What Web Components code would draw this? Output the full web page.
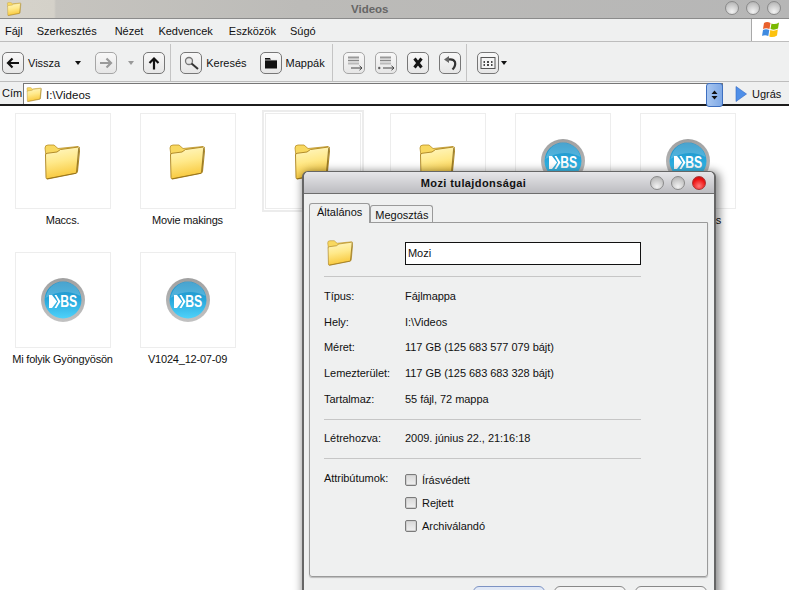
<!DOCTYPE html>
<html>
<head>
<meta charset="utf-8">
<title>Videos</title>
<style>
html, body { margin: 0; height: 590px; overflow: hidden; background: #fff; }
body { font: 11px "Liberation Sans", Arial, sans-serif; color: #111; }
</style>
</head>
<body>
<explorer-window></explorer-window>

<script>
const FOLDER = `
<svg viewBox="0 0 36 36" width="100%" height="100%">
  <defs>
    <linearGradient id="front" x1="0" y1="0" x2="0.2" y2="1">
      <stop offset="0" stop-color="#fff8c8"/>
      <stop offset="0.5" stop-color="#ffe98a"/>
      <stop offset="1" stop-color="#f8c83c"/>
    </linearGradient>
  </defs>
  <path d="M1 4Q1 1 4 1H10L14 4.500L34 2.500L33 8L2 12Z" fill="#f8d860" stroke="#b98f24" stroke-width=".8"/>
  <path d="M1.500 11Q1.500 9.500 3 9.300L13 8L16.500 5.500L34.500 3Q36 3 35.800 4.500L33.500 27.500Q33.300 29 32 29.300L3.500 35Q2 35 2 33.500Z" fill="url(#front)" stroke="#a9811f" stroke-width=".9"/>
  <path d="M34.800 4L32.600 28.500" stroke="#7c5d12" stroke-width="1.200" fill="none" opacity=".75"/>
  <path d="M3 34.800L32 29.200" stroke="#8a6814" stroke-width="1" fill="none" opacity=".7"/>
</svg>`;

const BS_ICON = `
<svg viewBox="0 0 44 44" width="100%" height="100%">
  <defs>
    <linearGradient id="ring" x1="0" y1="0" x2="0" y2="1">
      <stop offset="0" stop-color="#a0a0a0"/>
      <stop offset="1" stop-color="#c2c2c2"/>
    </linearGradient>
    <linearGradient id="ball" x1="0" y1="0" x2="0" y2="1">
      <stop offset="0" stop-color="#1c8cc2"/>
      <stop offset="0.5" stop-color="#28a8dc"/>
      <stop offset="1" stop-color="#4fd2fa"/>
    </linearGradient>
  </defs>
  <circle cx="22" cy="22" r="22" fill="url(#ring)"/>
  <circle cx="22" cy="22" r="18.500" fill="url(#ball)"/>
  <path d="M4.500 20Q22 9 39.500 18Q36 5 22 3.600Q8 5 4.500 20Z" fill="#fff" opacity=".2"/>
  <path d="M8 17H11L16 23.500L11 30H8ZM13.500 17H15.500L19.500 23.500L15.500 30H13.500L17.200 23.500Z" fill="#fff"/>
  <text x="27.700" y="29.200" text-anchor="middle" font-family="Liberation Sans, Arial, sans-serif" font-weight="700" font-size="16.500" fill="#fff" textLength="17" lengthAdjust="spacingAndGlyphs">BS</text>
</svg>`;

// toolbar glyphs, 22x22
const GLYPHS = {
  back: `<path d="M17 11H6.500M10.500 6.500L6 11L10.500 15.500" fill="none" stroke="#111" stroke-width="2.200"/>`,
  forward: `<path d="M5 11H15.500M11.500 6.500L16 11L11.500 15.500" fill="none" stroke="#9a9a9a" stroke-width="2.200"/>`,
  up: `<path d="M11 17.500V6.500M6.500 11L11 6.500L15.500 11" fill="none" stroke="#111" stroke-width="2.200"/>`,
  search: `<circle cx="9" cy="9" r="3.500" fill="#e8e8e8" stroke="#777" stroke-width="1.300"/><path d="M11.500 11.500L18 17" stroke="#333" stroke-width="2"/>`,
  folders: `<path d="M5 6H10L11 8H17V16.500H5Z" fill="#111"/><path d="M5 8H17" stroke="#ddd" stroke-width=".8"/>`,
  move: `<path d="M5 5.500H16" stroke="#999" stroke-width="2"/><path d="M5 8.500H16" stroke="#888" stroke-width="1.500"/><path d="M5 11.500H16" stroke="#bbb" stroke-width="2"/><path d="M8 16H19M16.500 13.800L19 16L16.500 18.200" fill="none" stroke="#444"/>`,
  copy: `<path d="M5 5.500H16" stroke="#999" stroke-width="2"/><path d="M5 8.500H16" stroke="#888" stroke-width="1.500"/><path d="M5 11.500H16" stroke="#bbb" stroke-width="2"/><path d="M8 16H19M16.500 13.800L19 16L16.500 18.200" fill="none" stroke="#444"/><path d="M3 16H5.500M4.200 14.800V17.200" stroke="#444"/>`,
  del: `<path d="M7.500 6.500L14.500 15.500M14.500 6.500L7.500 15.500" stroke="#151515" stroke-width="3"/>`,
  undo: `<path d="M9 7.500Q14.500 6.500 16 10Q17 14 13.500 17.500" fill="none" stroke="#333" stroke-width="2.200"/><path d="M5 7.500L10 4V11Z" fill="#666"/>`,
  views: `<rect x="4" y="5.500" width="14" height="11" fill="#f4f4f4" stroke="#555"/><path d="M6.500 10H8M10 10H12M14 10H15.500M6.500 13H8M10 13H12M14 13H15.500" stroke="#111" stroke-width="1.500"/>`,
};

class WindowDot extends HTMLElement {
  constructor() {
    super();
    this.attachShadow({ mode: "open" });
    this.shadowRoot.innerHTML = `
      <style>
      :host { display: block; box-sizing: border-box; width: var(--dot, 14px); height: var(--dot, 14px); border-radius: 50%;
        border: 1px solid #8a8a8a; background: radial-gradient(circle at 50% 80%, #f2f2f2, #c8c8c8 60%, #a9a9a9); }
      :host([red]) { border-color: #a33; background: radial-gradient(circle at 50% 75%, #ff7a7a, #ee1515 60%, #b80d0d); }
      </style>`;
  }
}
customElements.define("window-dot", WindowDot);

class FolderIcon extends HTMLElement {
  constructor() {
    super();
    this.attachShadow({ mode: "open" });
    this.shadowRoot.innerHTML = `<style>:host { display: block; width: 36px; height: 36px; }</style>${FOLDER}`;
  }
}
customElements.define("folder-icon", FolderIcon);

class ExplorerTitle extends HTMLElement {
  constructor() {
    super();
    this.attachShadow({ mode: "open" });
    this.shadowRoot.innerHTML = `
      <style>
      :host { display: flex; align-items: center; height: 19px; box-sizing: border-box;
        border-bottom: 1px solid #8b8b8b; padding: 0 6px 0 6px;
        background: linear-gradient(90deg, #d6d3cb 0, #d4d1c9 54px, #c6c4bf 56px, #bcbbb8 300px, #b6b6b6 100%); }
      folder-icon { width: 16px; height: 14px; margin-right: 329px; }
      .name { font-weight: 700; font-size: 11.500px; color: #666; flex: 1; }
      .dots { display: flex; gap: 7px; --dot: 14px; margin-right: 2px; margin-top: -3px; }
      </style>
      <folder-icon></folder-icon>
      <span class="name"><slot></slot></span>
      <div class="dots"><window-dot></window-dot><window-dot></window-dot><window-dot></window-dot></div>`;
  }
}
customElements.define("explorer-title", ExplorerTitle);

class MenuBar extends HTMLElement {
  constructor() {
    super();
    this.attachShadow({ mode: "open" });
    this.shadowRoot.innerHTML = `
      <style>
      :host { display: flex; align-items: center; height: 23px; box-sizing: border-box;
        background: #eff0f0; border-bottom: 1px solid #bdbdbd; padding-left: 5px; }
      .items { display: flex; gap: 16px; flex: 1; padding-top: 2px; }
      .flag { width: 37px; height: 22px; background: #fff; border-left: 1px solid #a8a8a8; display: flex; align-items: center; justify-content: center; }
      </style>
      <div class="items"><slot></slot></div>
      <div class="flag">
        <svg width="20" height="20" viewBox="0 0 20 20">
          <path d="M3 3Q6 1 9.500 3L8.500 9Q5 7.500 2 9Z" fill="#e8612c"/>
          <path d="M10.500 3.500Q14 5 18 2.500L17 8.500Q13.500 10.500 9.500 9Z" fill="#7ab800"/>
          <path d="M2 10Q5 8.500 8.300 10L7.300 16Q4 14.500 1 16Z" fill="#3f8ae0"/>
          <path d="M9.300 10Q13 11.500 16.800 9.500L16 15.500Q12 18 8.300 16.500Z" fill="#fcc20f"/>
        </svg>
      </div>`;
  }
}
customElements.define("menu-bar", MenuBar);

class ToolButton extends HTMLElement {
  constructor() {
    super();
    this.attachShadow({ mode: "open" });
    const glyph = GLYPHS[this.getAttribute("icon")];
    this.shadowRoot.innerHTML = `
      <style>
      :host { display: flex; align-items: center; gap: 4px; }
      .box { width: 22px; height: 22px; box-sizing: border-box; border: 1px solid #777; border-radius: 5px;
        background: linear-gradient(#f8f8f8, #e6e6e6); position: relative; }
      :host([off]) .box { border-color: #a6a6a6; }
      svg { position: absolute; left: -1px; top: -1px; }
      </style>
      <div class="box"><svg width="22" height="22" viewBox="0 0 22 22">${glyph}</svg></div>
      <slot></slot>`;
  }
}
customElements.define("tool-button", ToolButton);

class ToolBar extends HTMLElement {
  constructor() {
    super();
    this.attachShadow({ mode: "open" });
    this.shadowRoot.innerHTML = `
      <style>
      :host { display: flex; align-items: center; height: 40px; box-sizing: border-box;
        background: #eff0f0; border-bottom: 1px solid #bdbdbd; padding: 3px 0 0 2px; }
      ::slotted(.sep) { width: 1px; height: 37px; background: #c4c4c4; margin-top: -2px !important; }
      ::slotted(.arrow) { width: 0; height: 0; border: 3px solid transparent; border-top: 4px solid #111; border-bottom: 0; }
      </style>
      <slot></slot>`;
  }
}
customElements.define("tool-bar", ToolBar);

class AddressBar extends HTMLElement {
  constructor() {
    super();
    this.attachShadow({ mode: "open" });
    this.shadowRoot.innerHTML = `
      <style>
      :host { display: flex; align-items: flex-end; height: 24px; box-sizing: border-box;
        background: #eff0f0; border-bottom: 2px solid #1c1c1c; padding-left: 2px; }
      .cap { width: 21px; margin-bottom: 5px; }
      .field { width: 700px; height: 21px; box-sizing: border-box; background: #fff; border: 1px solid #777; border-bottom: 0;
        display: flex; align-items: center; position: relative; padding: 1px 0 0 2px; font-size: 11.500px; }
      folder-icon { width: 16px; height: 15px; margin-right: 4px; }
      .drop { position: absolute; right: -1px; top: -1px; width: 17px; height: 24px; box-sizing: border-box; border-radius: 3px;
        border: 1px solid #3d6fc0; background: linear-gradient(90deg, #a8c6f0, #7fa9e6); display: flex; align-items: center; justify-content: center; }
      .go { display: flex; align-items: center; margin: 0 0 2px 12px; gap: 5px; }
      </style>
      <span class="cap">Cím</span>
      <div class="field">
        <folder-icon></folder-icon><slot></slot>
        <div class="drop">
          <svg width="7" height="10" viewBox="0 0 7 10"><path d="M3.500 0.500L6.500 4H.5ZM.5 6H6.500L3.500 9.500Z" fill="#111"/></svg>
        </div>
      </div>
      <div class="go">
        <svg width="12" height="16" viewBox="0 0 12 16"><path d="M1 .5L11.500 8L1 15.500Z" fill="#4f8fe8" stroke="#2f68c4" stroke-width=".6"/></svg>
        <span>Ugrás</span>
      </div>`;
  }
}
customElements.define("address-bar", AddressBar);

class FileThumb extends HTMLElement {
  constructor() {
    super();
    this.attachShadow({ mode: "open" });
    const video = this.getAttribute("kind") === "video";
    this.shadowRoot.innerHTML = `
      <style>
      :host { display: flex; flex-direction: column; align-items: center; width: 125px; height: 139px; }
      .tile { width: 96px; height: 96px; box-sizing: border-box; border: 1px solid #ededed; background: #fff;
        display: flex; align-items: center; justify-content: center; }
      :host([selected]) .tile { outline: 2px solid #ececec; outline-offset: 1px; border-color: #ececec; }
      .art { width: 44px; height: 44px; margin-top: -1px; }
      .art.folder { width: 36px; height: 36px; margin: 1px 0 0 -1px; }
      .label { margin-top: 5px; line-height: 13px; white-space: nowrap; letter-spacing: -.2px; }
      </style>
      <div class="tile"><div class="art ${video ? "" : "folder"}">${video ? BS_ICON : FOLDER}</div></div>
      <div class="label"><slot></slot></div>`;
  }
}
customElements.define("file-thumb", FileThumb);

class PropRow extends HTMLElement {
  constructor() {
    super();
    this.attachShadow({ mode: "open" });
    this.shadowRoot.innerHTML = `
      <style>
      :host { display: grid; grid-template-columns: 81px 1fr; height: 25.750px; align-items: center; }
      </style>
      <span>${this.getAttribute("name")}</span>
      <span><slot></slot></span>`;
  }
}
customElements.define("prop-row", PropRow);

class CheckRow extends HTMLElement {
  constructor() {
    super();
    this.attachShadow({ mode: "open" });
    this.shadowRoot.innerHTML = `
      <style>
      :host { display: flex; align-items: center; gap: 5px; height: 23px; }
      i { display: block; box-sizing: border-box; width: 12px; height: 12px; border: 1px solid #7b7b7b; border-radius: 2px;
        background: linear-gradient(#d8d8d8, #f0f0f0); box-shadow: inset 0 0 0 1px #cfcfcf; }
      </style>
      <i></i><slot></slot>`;
  }
}
customElements.define("check-row", CheckRow);

class PropsDialog extends HTMLElement {
  constructor() {
    super();
    this.attachShadow({ mode: "open" });
    this.shadowRoot.innerHTML = `
      <style>
      :host { position: absolute; left: 302px; top: 171px; width: 414px; height: 440px; box-sizing: border-box;
        display: flex; flex-direction: column; background: #eff0f0;
        border: 1px solid #666; border-width: 1px 2px; border-radius: 6px 6px 0 0;
        box-shadow: 2px 2px 9px 2px rgba(0,0,0,.45); }
      .title { display: flex; align-items: center; height: 22px; box-sizing: border-box; flex: none;
        background: linear-gradient(#e6e6e9, #bcbcc0); border-bottom: 1px solid #6d6d6d; border-radius: 5px 5px 0 0; padding-right: 8px; }
      .title b { flex: 1; text-align: center; font-size: 11px; letter-spacing: .4px; color: #111; padding-right: 7px; }
      .dots { display: flex; gap: 7px; }
      .tabs { display: flex; padding: 9px 0 0 5px; height: 19px; flex: none; position: relative; z-index: 1; }
      .tab { box-sizing: border-box; border: 1px solid #9a9a9a; border-bottom: 0; border-radius: 3px 3px 0 0;
        padding: 3px 4px 0; background: #eff0f0; margin-top: 2px; height: 17px; }
      .tab.on { margin-top: 0; height: 20px; padding: 2px 7px 0; }
      .panel { flex: none; height: 355px; margin: 0 6px 0 5px; box-sizing: border-box; border: 1px solid #9a9a9a;
        border-radius: 0 0 3px 3px; padding: 17px 66px 0 14px; box-shadow: 0 1px 1px #bbb; letter-spacing: -.05px; }
      .head { display: grid; grid-template-columns: 81px 1fr; align-items: center; height: 26px; }
      folder-icon { width: 26px; height: 26px; margin-left: 3px; }
      .name { height: 23px; box-sizing: border-box; border: 1px solid #111; background: #fff; padding-left: 2px; line-height: 21px; }
      hr { border: 0; border-top: 1px solid #c6c6c6; margin: 0; }
      .attrs { display: grid; grid-template-columns: 81px 1fr; }
      .attrs > span { margin-top: 4px; }
      .buttons { display: flex; justify-content: flex-end; gap: 9px; padding: 9px 7px 0 0; }
      .buttons div { width: 72px; height: 22px; box-sizing: border-box; border: 1px solid #888; border-radius: 6px; text-align: center; line-height: 20px; background: #f5f5f5; }
      .buttons .def { border-color: #7d93c4; background: linear-gradient(#dfe7f6, #f5f5f5); }
      </style>
      <div class="title"><b>Mozi tulajdonságai</b>
        <div class="dots"><window-dot></window-dot><window-dot></window-dot><window-dot red></window-dot></div>
      </div>
      <div class="tabs"><div class="tab on">Általános</div><div class="tab">Megosztás</div></div>
      <div class="panel">
        <div class="head"><folder-icon></folder-icon><div class="name">Mozi</div></div>
        <hr style="margin-top:10px">
        <div style="margin-top:6px">
          <prop-row name="Típus:">Fájlmappa</prop-row>
          <prop-row name="Hely:">I:\\Videos</prop-row>
          <prop-row name="Méret:">117 GB (125 683 577 079 bájt)</prop-row>
          <prop-row name="Lemezterület:">117 GB (125 683 683 328 bájt)</prop-row>
          <prop-row name="Tartalmaz:">55 fájl, 72 mappa</prop-row>
        </div>
        <hr style="margin-top:7px">
        <prop-row name="Létrehozva:" style="margin-top:5.500px">2009. június 22., 21:16:18</prop-row>
        <hr style="margin-top:7px">
        <div class="attrs" style="margin-top:9px">
          <span>Attribútumok:</span>
          <div>
            <check-row>Írásvédett</check-row>
            <check-row>Rejtett</check-row>
            <check-row>Archiválandó</check-row>
          </div>
        </div>
      </div>
      <div class="buttons"><div class="def">OK</div><div>Mégse</div><div>Alkalmaz</div></div>`;
  }
}
customElements.define("props-dialog", PropsDialog);

class ExplorerWindow extends HTMLElement {
  constructor() {
    super();
    this.attachShadow({ mode: "open" });
    this.shadowRoot.innerHTML = `
      <style>
      :host { display: block; position: relative; width: 789px; height: 590px; overflow: hidden; background: #fff; }
      .files { display: grid; grid-template-columns: repeat(6, 125px); padding-top: 7px; }
      </style>
      <explorer-title>Videos</explorer-title>
      <menu-bar>
        <span style="margin-right:-2px">Fájl</span><span style="margin-right:2px">Szerkesztés</span><span style="margin-right:-1px">Nézet</span><span>Kedvencek</span><span style="margin-right:-2px">Eszközök</span><span>Súgó</span>
      </menu-bar>
      <tool-bar>
        <tool-button icon="back">Vissza</tool-button>
        <span class="arrow" style="margin:0 14px 0 15px"></span>
        <tool-button icon="forward" off></tool-button>
        <span class="arrow" style="margin:0 9px 0 11px;border-top-color:#999"></span>
        <tool-button icon="up"></tool-button>
        <span class="sep" style="margin:0 9px 0 5px"></span>
        <tool-button icon="search">Keresés</tool-button>
        <tool-button icon="folders" style="margin-left:13px">Mappák</tool-button>
        <span class="sep" style="margin:0 10px 0 7px"></span>
        <tool-button icon="move" off></tool-button>
        <tool-button icon="copy" off style="margin-left:10px"></tool-button>
        <tool-button icon="del" style="margin-left:10px"></tool-button>
        <tool-button icon="undo" style="margin-left:10px"></tool-button>
        <span class="sep" style="margin:0 10px 0 5px"></span>
        <tool-button icon="views"></tool-button>
        <span class="arrow" style="margin-left:2px"></span>
      </tool-bar>
      <address-bar>I:\\Videos</address-bar>
      <div class="files">
        <file-thumb>Maccs.</file-thumb>
        <file-thumb>Movie makings</file-thumb>
        <file-thumb selected></file-thumb>
        <file-thumb></file-thumb>
        <file-thumb kind="video"></file-thumb>
        <file-thumb kind="video"><span style="padding-left:62px">s</span></file-thumb>
        <file-thumb kind="video">Mi folyik Gyöngyösön</file-thumb>
        <file-thumb kind="video">V1024_12-07-09</file-thumb>
      </div>
      <props-dialog></props-dialog>`;
  }
}
customElements.define("explorer-window", ExplorerWindow);
</script>
</body>
</html>
